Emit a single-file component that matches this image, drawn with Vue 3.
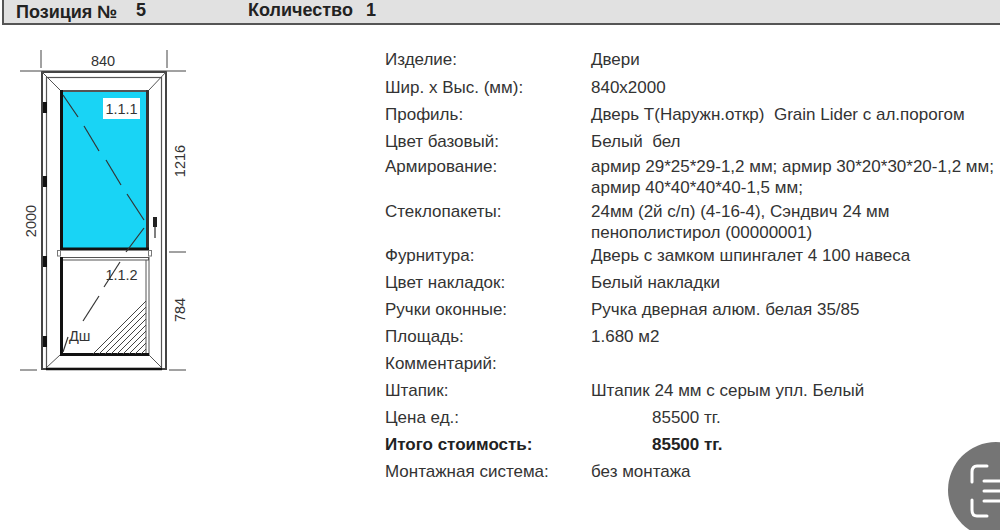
<script setup>
const rows = [
  { label: 'Изделие:', lines: ['Двери'], gap: 'g7' },
  { label: 'Шир. х Выс. (мм):', lines: ['840x2000'] },
  { label: 'Профиль:', lines: ['Дверь Т(Наружн.откр)  Grain Lider с ал.порогом'] },
  { label: 'Цвет базовый:', lines: ['Белый  бел'], gap: 'g4' },
  { label: 'Армирование:', lines: ['армир 29*25*29-1,2 мм; армир 30*20*30*20-1,2 мм;', 'армир 40*40*40*40-1,5 мм;'], gap: 'g3' },
  { label: 'Стеклопакеты:', lines: ['24мм (2й с/п) (4-16-4), Сэндвич 24 мм', 'пенополистирол (00000001)'], gap: 'g2' },
  { label: 'Фурнитура:', lines: ['Дверь с замком шпингалет 4 100 навеса'] },
  { label: 'Цвет накладок:', lines: ['Белый накладки'] },
  { label: 'Ручки оконные:', lines: ['Ручка дверная алюм. белая 35/85'] },
  { label: 'Площадь:', lines: ['1.680 м2'] },
  { label: 'Комментарий:', lines: [''] },
  { label: 'Штапик:', lines: ['Штапик 24 мм с серым упл. Белый'] },
  { label: 'Цена ед.:', lines: ['85500 тг.'], price: true },
  { label: 'Итого стоимость:', lines: ['85500 тг.'], price: true, bold: true },
  { label: 'Монтажная система:', lines: ['без монтажа'] }
]
const dashes = [
  [63, 95, 78, 117], [84, 126, 99, 151], [106, 160, 121, 185], [127, 194, 144, 220],
  [144, 228, 126, 252], [120, 262, 104, 287], [99, 296, 83, 321], [68, 337, 63, 352]
]
const hatch = [0, 1, 2, 3, 4, 5, 6, 7, 8].map(i => {
  const d = i * 6
  return [146, 301 + d, 93 + d, 354]
})
const hinges = [102, 176, 256, 336]
</script>

<template>
  <div class="page">
    <header class="bar">
      <span class="bar-pos">Позиция №</span>
      <span class="bar-num">5</span>
      <span class="bar-qty">Количество</span>
      <span class="bar-one">1</span>
    </header>
    <main class="body">
      <svg class="door" viewBox="0 30 200 350" width="200" height="350">
        <g stroke="#444" stroke-width="1" fill="none">
          <path d="M41 50V68M167 50V68M20 71H186M169 252H186M169 370H186M20 370H37" />
        </g>
        <rect x="42" y="72" width="124" height="297" fill="#fff" stroke="#444" stroke-width="2" />
        <rect x="46.500" y="77.500" width="115" height="291" fill="#fff" stroke="#555" stroke-width="1.200" />
        <path d="M41 71L60 90M167 71L149 90M46 368L60 355M162 368L149 355" stroke="#555" stroke-width="1" />
        <path d="M46 369H162" stroke="#111" stroke-width="2.500" />
        <rect x="60" y="90" width="89" height="160" fill="#19d4f5" />
        <path d="M60 91H149" stroke="#555" stroke-width="2" fill="none" />
        <path d="M61.500 90V250" stroke="#111" stroke-width="3" fill="none" />
        <path d="M147.500 90V250" stroke="#333" stroke-width="3" fill="none" />
        <path d="M60 249H149" stroke="#111" stroke-width="3" />
        <rect x="57.500" y="250.500" width="3" height="5.500" fill="#fff" stroke="#777" stroke-width="1" />
        <rect x="148.500" y="250.500" width="3" height="5.500" fill="#fff" stroke="#777" stroke-width="1" />
        <rect x="60.500" y="257.500" width="88" height="2.500" fill="#fff" stroke="#555" stroke-width="1" />
        <path d="M61.500 257V356" stroke="#111" stroke-width="3" fill="none" />
        <path d="M146 260V354M149 257V356" stroke="#555" stroke-width="1" />
        <path d="M60 354.500H149" stroke="#111" stroke-width="3" />
        <g stroke="#444" stroke-width="1">
          <line v-for="(h, i) in hatch" :key="i" :x1="h[0]" :y1="h[1]" :x2="h[2]" :y2="h[3]" />
        </g>
        <g stroke="#333" stroke-width="1.200">
          <line v-for="(d, i) in dashes" :key="i" :x1="d[0]" :y1="d[1]" :x2="d[2]" :y2="d[3]" />
        </g>
        <rect v-for="y in hinges" :key="y" x="43" :y="y" width="4" height="11" fill="#111" />
        <rect x="153" y="217" width="4" height="10" fill="#222" />
        <path d="M155 227V238" stroke="#555" stroke-width="1.500" />
        <rect x="103" y="98" width="37" height="21" fill="#fff" />
        <text class="label" x="121.500" y="114" text-anchor="middle">1.1.1</text>
        <text class="label" x="121.500" y="280" text-anchor="middle">1.1.2</text>
        <text class="label" x="69" y="341">Дш</text>
        <text class="label" x="103" y="66" text-anchor="middle">840</text>
        <text class="label" transform="translate(36 221) rotate(-90)" text-anchor="middle">2000</text>
        <text class="label" transform="translate(185 161) rotate(-90)" text-anchor="middle">1216</text>
        <text class="label" transform="translate(185 310) rotate(-90)" text-anchor="middle">784</text>
      </svg>
      <section class="spec">
        <div v-for="r in rows" :key="r.label" class="row" :class="[r.gap, { bold: r.bold }]">
          <div class="key">{{ r.label }}</div>
          <div class="val" :class="{ price: r.price }">
            <div v-for="(l, i) in r.lines" :key="i" class="line">{{ l }}</div>
          </div>
        </div>
      </section>
    </main>
    <div class="fab">
      <svg width="52" height="96" viewBox="0 0 52 96" fill="none" stroke="#fff" stroke-width="3" stroke-linecap="round">
        <path d="M39 24H29Q24 24 24 30V40M24 58V68Q24 74 29 74H39M36 39H52M36 49H52M36 59H52" />
      </svg>
    </div>
  </div>
</template>

<style scoped>
.page {
  position: relative;
  width: 1000px;
  height: 530px;
  overflow: hidden;
  background: #fff;
  color: #333;
  font-family: "Liberation Sans", Arial, sans-serif;
  font-size: 17px;
}
.bar {
  box-sizing: border-box;
  height: 25px;
  margin-left: 2px;
  background: #e1e1e1;
  border-left: 2px solid #555;
  border-bottom: 2px solid #555;
  display: flex;
  align-items: flex-start;
  font-weight: bold;
  font-size: 18px;
  line-height: 20px;
  color: #222;
}
.bar-pos { margin-left: 12px; margin-top: 2px; width: 120px; white-space: nowrap; }
.bar-num { margin-top: 0; width: 112px; }
.bar-qty { width: 118px; margin-top: 0; white-space: nowrap; }
.bar-one { margin-top: 0; }
.body {
  display: flex;
  margin-top: 5px;
}
.door { flex: none; display: block; }
.label {
  font-family: "Liberation Sans", Arial, sans-serif;
  font-size: 14.500px;
  fill: #333;
}
.spec {
  margin-left: 185px;
  margin-top: 19px;
  flex: 1;
  min-width: 0;
}
.row {
  display: flex;
  margin-bottom: 6px;
  line-height: 21px;
  white-space: pre;
}
.row.g7 { margin-bottom: 7px; }
.row.g4 { margin-bottom: 4px; }
.row.g3 { margin-bottom: 3px; }
.row.g2 { margin-bottom: 2px; }
.row.bold { font-weight: bold; color: #222; }
.key { width: 206px; flex: none; }
.val.price { padding-left: 61px; }
.line { min-height: 21px; }
.fab {
  position: absolute;
  left: 948px;
  top: 442px;
  width: 96px;
  height: 96px;
  border-radius: 50%;
  background: #757575;
}
.fab svg { display: block; }
</style>
